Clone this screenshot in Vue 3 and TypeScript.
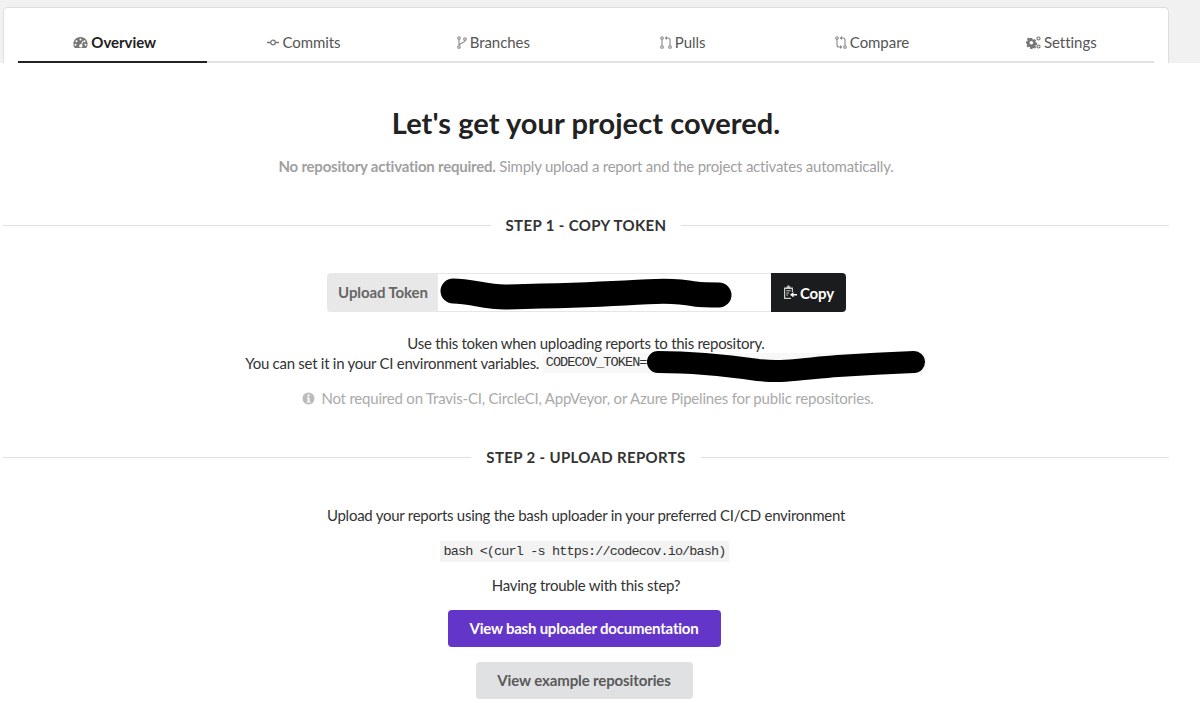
<script setup lang="ts">
const tabs = [
  { name: 'Overview', icon: 'gauge', active: true },
  { name: 'Commits', icon: 'commit', active: false },
  { name: 'Branches', icon: 'branch', active: false },
  { name: 'Pulls', icon: 'pull', active: false },
  { name: 'Compare', icon: 'compare', active: false },
  { name: 'Settings', icon: 'cogs', active: false },
]
</script>

<template>
  <div class="page">
    <div class="top">
      <nav class="card">
        <div class="tabs">
          <a v-for="t in tabs" :key="t.name" class="tab" :class="{ active: t.active }">
            <svg v-if="t.icon === 'gauge'" class="ico" width="15" height="13" viewBox="0 0 15 13">
              <path fill="#777" fill-rule="evenodd" d="M7.500 1C3.400 1 .4 4.200.4 8c0 1.300.3 2.500.9 3.600.2.300.5.400.8.400h10.800c.3 0 .6-.1.8-.4.6-1.100.9-2.300.9-3.600 0-3.800-3-7-7.100-7zM7.500 2.600a1 1 0 1 1 0 2 1 1 0 0 1 0-2zM3.500 4.200a1 1 0 1 1 0 2 1 1 0 0 1 0-2zM11.500 4.200a1 1 0 1 1 0 2 1 1 0 0 1 0-2zM2.500 7.700a1 1 0 1 1 0 2 1 1 0 0 1 0-2zM12.500 7.700a1 1 0 1 1 0 2 1 1 0 0 1 0-2zM9.800 4.800l.8.4-1.700 3.600c.3.300.5.700.5 1.100 0 .9-.7 1.600-1.600 1.600s-1.600-.7-1.600-1.600.7-1.600 1.600-1.600h.3z" />
            </svg>
            <svg v-else-if="t.icon === 'commit'" class="ico" width="12" height="7" viewBox="0 0 12 7">
              <circle cx="6" cy="3.500" r="2.300" fill="none" stroke="#777" stroke-width="1.300" />
              <path d="M0 3.500h3.500M8.500 3.500H12" stroke="#777" stroke-width="1.300" />
            </svg>
            <svg v-else-if="t.icon === 'branch'" class="ico" width="10" height="13" viewBox="0 0 10 13">
              <g fill="none" stroke="#888" stroke-width="1.100">
                <circle cx="2" cy="2" r="1.300" />
                <circle cx="2" cy="11" r="1.300" />
                <circle cx="8" cy="3" r="1.300" />
                <path d="M2 3.300v6.400M8 4.300c0 3-5.500 2.200-6 5.200" />
              </g>
            </svg>
            <svg v-else-if="t.icon === 'pull'" class="ico" width="12" height="13" viewBox="0 0 12 13">
              <g fill="none" stroke="#888" stroke-width="1.100">
                <circle cx="2" cy="2" r="1.300" />
                <circle cx="2" cy="11" r="1.300" />
                <circle cx="10" cy="11" r="1.300" />
                <path d="M2 3.300v6.400M10 9.700V4c0-1.200-.8-2-2-2H6" />
              </g>
              <path d="M7 0v4L4.600 2z" fill="#888" />
            </svg>
            <svg v-else-if="t.icon === 'compare'" class="ico" width="12" height="13" viewBox="0 0 12 13">
              <g fill="none" stroke="#888" stroke-width="1.100">
                <circle cx="2" cy="2" r="1.300" />
                <circle cx="10" cy="11" r="1.300" />
                <path d="M2 3.300V9c0 1.200.8 2 2 2h2M10 9.700V4c0-1.200-.8-2-2-2H6" />
              </g>
              <path d="M7 0v4L4.600 2zM5 9v4l2.400-2z" fill="#888" />
            </svg>
            <svg v-else-if="t.icon === 'cogs'" class="ico" width="15" height="13" viewBox="0 0 15 13">
              <path fill="#777" fill-rule="evenodd" d="M4.300 2h2l.3 1.300 1 .4 1.200-.7 1.300 1.400-.7 1.100.4 1 1.300.3v2l-1.300.3-.4 1 .7 1.200-1.300 1.300-1.200-.7-1 .4-.3 1.300h-2L4 11.100l-1-.4-1.200.7L.5 10l.7-1.200-.4-1L0 7.500v-2l1.300-.3.4-1L1 3l1.300-1.400 1.200.7 1-.4zM5.300 5a1.800 1.800 0 1 0 0 3.600 1.800 1.800 0 0 0 0-3.600z" />
              <g fill="none" stroke="#777" stroke-width="1.200">
                <circle cx="12.500" cy="2.500" r="1.500" />
                <circle cx="12.500" cy="10.500" r="1.500" />
              </g>
            </svg>
            <span>{{ t.name }}</span>
          </a>
        </div>
      </nav>
    </div>

    <main class="content">
      <h1 class="title">Let's get your project covered.</h1>
      <p class="lead"><strong>No repository activation required.</strong> Simply upload a report and the project activates automatically.</p>

      <div class="divider step1"><span>STEP 1 - COPY TOKEN</span></div>

      <div class="token-row">
        <div class="token-label">Upload Token</div>
        <div class="token-field">
          <svg class="scribble" width="294" height="36" viewBox="0 0 294 36">
            <path fill="none" stroke="#000" stroke-width="25" stroke-linecap="round" d="M13 15c18 0 32 6 52 6 45-1 80-2 120-4 30-2 50-3 70 1 8 1 15 1 24 1" />
          </svg>
        </div>
        <button class="copy-btn">
          <svg width="14" height="15" viewBox="0 0 14 15">
            <path fill="#ccc" fill-rule="evenodd" d="M1 2.500h2.500V1.500h1C4.700.6 5 .2 5.500.2s.8.4 1 1.300h1v1H10V7H8.800V4H2.200v8.800H8V14H1z" />
            <path fill="#ccc" d="M3.300 5.200h4.400v1H3.300zM3.300 7.400h2.800v1H3.300zM3.300 9.600h1.800v1H3.300z" />
            <path fill="#fff" d="M14 9v1.500h-3.500v2L7 9.800l3.500-2.700V9z" />
          </svg>
          <span>Copy</span>
        </button>
      </div>

      <div class="token-help">
        <p>Use this token when uploading reports to this repository.</p>
        <p class="env-line">You can set it in your CI environment variables. <code class="env-code">CODECOV_TOKEN=<svg class="scribble2" width="290" height="40" viewBox="0 0 290 40"><path fill="none" stroke="#000" stroke-width="22" stroke-linecap="round" d="M15 16c30 0 65 3 100 8 28 3 50-2 80-4 30-2 50-3 76-4" /></svg></code></p>
      </div>

      <p class="note">
        <svg width="13" height="13" viewBox="0 0 13 13">
          <circle cx="6.500" cy="6.500" r="6" fill="#bbb" />
          <rect x="5.500" y="2.500" width="2" height="2" fill="#fff" />
          <path d="M4.700 5.500h2.800v4h1v1H4.700v-1h1V6.500h-1z" fill="#fff" />
        </svg>
        <span>Not required on Travis-CI, CircleCI, AppVeyor, or Azure Pipelines for public repositories.</span>
      </p>

      <div class="divider step2"><span>STEP 2 - UPLOAD REPORTS</span></div>

      <p class="upload">Upload your reports using the bash uploader in your preferred CI/CD environment</p>
      <code class="cmd">bash &lt;(curl -s https://codecov.io/bash)</code>
      <p class="trouble">Having trouble with this step?</p>
      <button class="btn primary">View bash uploader documentation</button>
      <button class="btn secondary">View example repositories</button>
    </main>
  </div>
</template>

<style>
html, body { margin: 0; background: #fff; }
</style>

<style scoped>
.page {
  width: 1200px;
  height: 703px;
  overflow: hidden;
  font-family: Lato, "Noto Sans", sans-serif;
  color: #333;
  font-size: 15px;
}
.top {
  background: #f1f1f1;
  height: 63px;
  padding: 7px 31px 0 3px;
  box-sizing: border-box;
}
.card {
  box-sizing: border-box;
  height: 56px;
  background: #fff;
  border: 1px solid #dedede;
  border-bottom: none;
  border-radius: 5px 5px 0 0;
  padding: 0 14px;
  display: flex;
  align-items: flex-end;
}
.tabs {
  flex: 1;
  display: flex;
  border-bottom: 2px solid #e2e2e2;
  height: 50px;
  box-sizing: border-box;
}
.tab {
  flex: 1;
  display: flex;
  align-items: center;
  justify-content: center;
  gap: 3px;
  color: #555;
  margin-bottom: -2px;
  padding: 10px 0 0 4px;
  border-bottom: 2px solid transparent;
  letter-spacing: -0.05px;
}
.tab.active {
  color: #222;
  font-weight: 700;
  border-bottom-color: #222;
}
.ico { flex: none; }
.content {
  display: flex;
  flex-direction: column;
  align-items: center;
  width: 1166px;
  margin-left: 3px;
  letter-spacing: -0.24px;
}
.title {
  margin: 41px 0 0;
  font-size: 29px;
  line-height: 38px;
  font-weight: 700;
  color: #222;
  letter-spacing: 0.07px;
}
.lead {
  margin: 13px 0 0;
  line-height: 22px;
  color: #a0a0a0;
  letter-spacing: -0.22px;
}
.divider {
  align-self: stretch;
  display: flex;
  align-items: center;
  gap: 15px;
  font-weight: 700;
  font-size: 15px;
  letter-spacing: 0.35px;
  color: #333;
  line-height: 20px;
}
.divider::before, .divider::after {
  content: "";
  flex: 1;
  height: 1px;
  background: #e0e0e0;
}
.step1 { margin-top: 38px; }
.step2 { margin-top: 38px; }
.token-row {
  display: flex;
  width: 519px;
  height: 39px;
  margin-top: 38px;
  letter-spacing: -0.1px;
}
.token-label {
  width: 111px;
  background: #e8e8e8;
  color: #666;
  font-weight: 700;
  display: flex;
  align-items: center;
  justify-content: center;
  border-radius: 4px 0 0 4px;
  padding: 0 0 2px 2px;
  box-sizing: border-box;
}
.token-field {
  flex: 1;
  border: 1px solid #e6e6e6;
  border-left: none;
  border-right: none;
  position: relative;
}
.scribble { position: absolute; left: 2px; top: 2px; }
.copy-btn {
  width: 75px;
  border: none;
  background: #1b1c1d;
  color: #fff;
  border-radius: 0 4px 4px 0;
  font: 700 15px Lato, sans-serif;
  letter-spacing: -0.1px;
  display: flex;
  align-items: center;
  justify-content: center;
  gap: 3px;
  padding: 0 0 0 1px;
}
.token-help {
  margin-top: 21px;
  text-align: center;
  line-height: 20px;
  letter-spacing: -0.27px;
}
.token-help p { margin: 0; }
.env-code {
  display: inline-block;
  position: relative;
  width: 384px;
  height: 20px;
  vertical-align: top;
  background: #f8f8f8;
  text-align: left;
  font-family: "Liberation Mono", monospace;
  font-size: 13.500px;
  letter-spacing: -0.900px;
  padding-left: 3px;
  box-sizing: border-box;
  color: #333;
}
.scribble2 { position: absolute; left: 100px; top: -7px; }
.note {
  margin: 14px 0 0;
  padding-left: 4px;
  line-height: 22px;
  color: #aaa;
  display: flex;
  align-items: center;
  gap: 6px;
  letter-spacing: -0.2px;
}
.upload { margin: 37px 0 0; line-height: 22px; letter-spacing: -0.26px; }
.cmd {
  margin-top: 15px;
  margin-right: 3px;
  background: #f3f3f3;
  padding: 0 3.500px;
  line-height: 21px;
  font-family: "Liberation Mono", monospace;
  font-size: 13.500px;
  letter-spacing: -0.870px;
  color: #333;
}
.trouble { margin: 12px 0 0; line-height: 22px; }
.btn {
  border: none;
  border-radius: 4px;
  font: 700 15px Lato, sans-serif;
  height: 37px;
  padding: 0 0 2px;
  margin-right: 4px;
}
.primary { margin-top: 14px; width: 273px; background: #6435c9; color: #fff; letter-spacing: -0.22px; }
.secondary { margin-top: 15px; width: 217px; background: #e0e1e2; color: #5a5a5a; letter-spacing: -0.12px; }
</style>
